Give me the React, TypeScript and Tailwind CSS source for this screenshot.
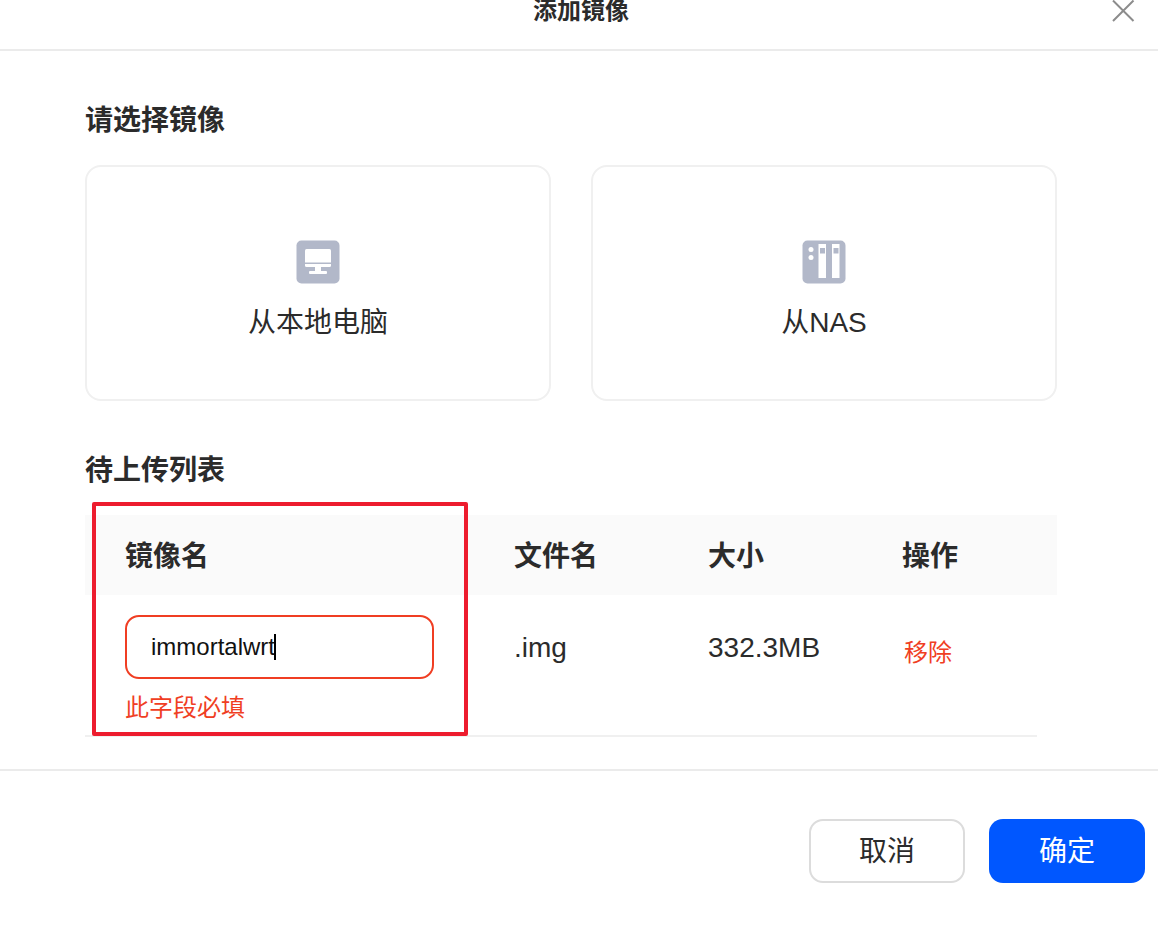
import React from "react";

const FONT = "font-['Liberation_Sans','Noto_Sans_CJK_SC',sans-serif]";

function PcIcon() {
  return (
    <svg width="44" height="44" viewBox="0 0 44 44">
      <rect x="0.5" y="0.5" width="43" height="43" rx="5" fill="#b2b8c9" />
      <path d="M9 10.500a1.500 1.500 0 0 1 1.500-1.500h23a1.500 1.500 0 0 1 1.500 1.500V22.500H9z" fill="#fff" />
      <path d="M9 24h26v1.500a1.500 1.500 0 0 1-1.500 1.500h-23A1.500 1.500 0 0 1 9 25.500z" fill="#fff" />
      <rect x="19" y="27" width="6" height="4" fill="#fff" />
      <rect x="13" y="31" width="18" height="3" rx="1" fill="#fff" />
    </svg>
  );
}

function NasIcon() {
  return (
    <svg width="44" height="44" viewBox="0 0 44 44">
      <rect x="0.5" y="0.5" width="43" height="43" rx="5" fill="#b2b8c9" />
      <circle cx="9" cy="9.500" r="2.500" fill="#fff" />
      <circle cx="9" cy="17.500" r="2.500" fill="#fff" />
      <rect x="16.500" y="4" width="7.500" height="34" fill="#fff" />
      <rect x="30" y="4" width="7.500" height="34" fill="#fff" />
      <rect x="18" y="8" width="5" height="5.500" fill="#b2b8c9" />
      <rect x="31.500" y="8" width="5" height="5.500" fill="#b2b8c9" />
    </svg>
  );
}

function SourceCard({ icon, label }: { icon: React.ReactNode; label: string }) {
  return (
    <div className="flex h-[236px] w-[466px] flex-col items-center rounded-[16px] border-2 border-[#f0f0f0] pt-[73px]">
      {icon}
      <div className="mt-[19px] text-[28px] leading-[40px] text-[#2b2b2b]">{label}</div>
    </div>
  );
}

export default function App() {
  return (
    <div className={`relative h-[927px] w-[1158px] overflow-hidden bg-white ${FONT}`}>
      <header className="relative flex h-[51px] items-center justify-center border-b-2 border-[#ebebeb]">
        <div className="relative -top-[14px] ml-[4px] text-[24px] font-bold leading-[34px] text-[#2b2b2b]">添加镜像</div>
        <svg className="absolute left-[1112px] top-0" width="23" height="22" viewBox="0 0 23 22">
          <path d="M1 0.500L21.500 21M21.500 0.500L1 21" stroke="#8c8c8c" strokeWidth="2" fill="none" />
        </svg>
      </header>

      <main className="pl-[85px] pr-[101px]">
        <h2 className="mt-[50px] text-[28px] font-bold leading-[40px] text-[#2b2b2b]">请选择镜像</h2>
        <div className="mt-[24px] flex gap-[40px]">
          <SourceCard icon={<PcIcon />} label="从本地电脑" />
          <SourceCard icon={<NasIcon />} label="从NAS" />
        </div>
        <h2 className="mt-[50px] text-[28px] font-bold leading-[40px] text-[#2b2b2b]">待上传列表</h2>

        <div className="mt-[24px] w-[972px]">
          <div className="flex h-[80px] items-center bg-[#fafafa] pt-[3px] text-[28px] font-bold text-[#2b2b2b]">
            <div className="w-[429px] pl-[40px]">镜像名</div>
            <div className="w-[194px]">文件名</div>
            <div className="w-[194px]">大小</div>
            <div>操作</div>
          </div>
          <div className="flex h-[142px] w-[952px] items-start border-b-2 border-[#f0f0f0] pt-[20px] text-[28px] text-[#2b2b2b]">
            <div className="w-[429px] pl-[40px]">
              <div className="flex h-[64px] w-[309px] items-center rounded-[14px] border-2 border-[#f03e23] pl-[24px] text-[24px] text-[#111]">
                immortalwrt
                <span className="-ml-[1px] h-[26px] w-[2px] bg-black" />
              </div>
              <div className="mt-[12px] text-[24px] leading-[34px] text-[#f03e23]">此字段必填</div>
            </div>
            <div className="w-[194px] pt-[14px] leading-[38px]">.img</div>
            <div className="w-[196px] pt-[14px] leading-[38px]">332.3MB</div>
            <div className="pt-[21px] text-[24px] leading-[34px] text-[#f03e23]">移除</div>
          </div>
        </div>
      </main>

      <footer className="mt-[32px] flex justify-end gap-[24px] border-t-2 border-[#ebebeb] pr-[13px] pt-[48px] text-[28px]">
        <button className="h-[64px] w-[156px] rounded-[14px] border-2 border-[#dcdcdc] bg-white pt-[2px] text-[#2b2b2b]">取消</button>
        <button className="h-[64px] w-[156px] rounded-[14px] bg-[#0057ff] pt-[2px] text-white">确定</button>
      </footer>

      <div className="pointer-events-none absolute left-[92px] top-[502px] h-[234px] w-[376px] rounded-[2px] border-[4px] border-[#ed1c2e]" />
    </div>
  );
}
